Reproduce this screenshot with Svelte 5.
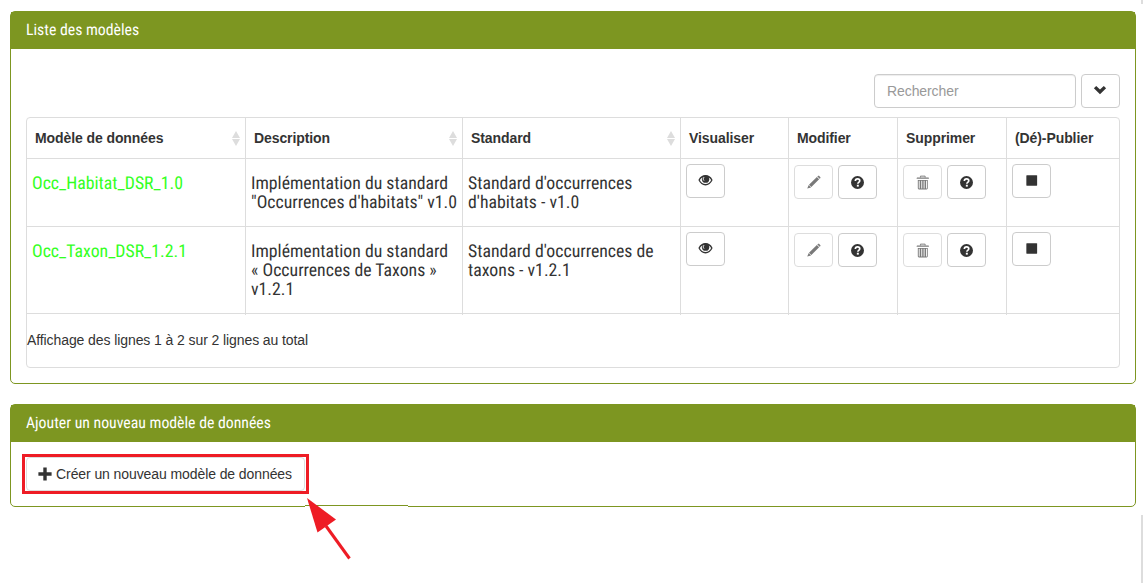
<script>
  const columns = [
    { label: 'Modèle de données', sort: true },
    { label: 'Description', sort: true },
    { label: 'Standard', sort: true },
    { label: 'Visualiser' },
    { label: 'Modifier' },
    { label: 'Supprimer' },
    { label: '(Dé)-Publier' }
  ];
  const rows = [
    {
      name: 'Occ_Habitat_DSR_1.0',
      description: ['Implémentation du standard', '"Occurrences d\'habitats" v1.0'],
      standard: ["Standard d'occurrences", "d'habitats - v1.0"]
    },
    {
      name: 'Occ_Taxon_DSR_1.2.1',
      description: ['Implémentation du standard', '« Occurrences de Taxons »', 'v1.2.1'],
      standard: ["Standard d'occurrences de", 'taxons - v1.2.1']
    }
  ];
</script>

{#snippet icon(name)}
  <svg class="icon" width="16" height="16" viewBox="0 0 16 16" fill="#333" aria-hidden="true">
    {#if name === 'eye'}
      <path d="M1.200 7.500C2.700 4.600 5.200 2.900 8 2.900s5.300 1.700 6.800 4.600C13.300 10.800 10.900 12.500 8 12.500S2.700 10.800 1.200 7.500Z" fill="none" stroke="#333" stroke-width="1.400" />
      <circle cx="8.100" cy="6.600" r="3.900" />
      <path d="M6.600 4.300c-1.300 1-1.300 2.800-.2 3.800" fill="none" stroke="#fff" stroke-width="1" />
    {:else if name === 'pencil'}
      <path d="m12.100 1.700.9-.9q.5-.3.900.1l1.400 1.400q.4.500.1.900l-.9.900ZM11.600 2.200 14 4.600l-8.300 8.200-2.500-2.500ZM2.900 10.700l2.500 2.500-4.100 1.300Z" />
    {:else if name === 'question'}
      <circle cx="8" cy="8" r="6.900" />
      <path d="M5.700 6.500C5.700 4.900 6.600 4.100 8.100 4.100s2.300.8 2.300 1.900c0 1.900-2 1.800-2 3.200" fill="none" stroke="#fff" stroke-width="1.800" />
      <path d="M7.300 10.400h2.100v2H7.300Z" fill="#fff" />
    {:else if name === 'trash'}
      <path d="M5.800 2.700V1.200h5v1.500" fill="none" stroke="#333" />
      <path d="M2.100 2.700h12.400l.5 1.300H1.600Z" />
      <path fill-rule="evenodd" d="M3 5.200h10.600v9q0 1.200-1.200 1.200H4.200Q3 15.400 3 14.200Zm1 1v8.100h1V6.200Zm2.700 0v8.100h1V6.200Zm2.500 0v8.100h1V6.200Zm2.500 0v8.100h1V6.200Z" />
    {:else if name === 'stop'}
      <rect x="2.500" y="2.500" width="11.500" height="11" rx=".5" />
    {:else if name === 'chevron'}
      <path d="m1.900 6.200 2.300-2.300L8 7.600l3.800-3.700 2.300 2.300L8 12.200Z" />
    {:else if name === 'plus'}
      <path d="M6.300 1.500h3.400v4.800h4.900v3.400H9.700v4.800H6.300V9.700H1.400V6.300h4.900Z" />
    {/if}
  </svg>
{/snippet}

{#snippet help()}
  <button class="btn square" aria-label="Aide">{@render icon('question')}</button>
{/snippet}

<main>
  <section class="panel list">
    <h2><span>Liste des modèles</span></h2>
    <div class="toolbar">
      <input type="text" placeholder="Rechercher" />
      <button class="btn toggle" aria-label="Options">{@render icon('chevron')}</button>
    </div>
    <div class="table">
      <div class="row head">
        {#each columns as column}
          <div class="cell">
            <b>{column.label}</b>
            {#if column.sort}
              <svg width="8" height="15" viewBox="0 0 8 15" fill="#ddd" aria-hidden="true">
                <path d="M4 0 8 7H0ZM0 8h8L4 15Z" />
              </svg>
            {/if}
          </div>
        {/each}
      </div>
      {#each rows as row}
        <div class="row body">
          <div class="cell text link"><span>{row.name}</span></div>
          <div class="cell text">{#each row.description as line}<span>{line}</span>{/each}</div>
          <div class="cell text">{#each row.standard as line}<span>{line}</span>{/each}</div>
          <div class="cell single"><button class="btn square" aria-label="Visualiser">{@render icon('eye')}</button></div>
          <div class="cell actions">
            <button class="btn square" disabled aria-label="Modifier">{@render icon('pencil')}</button>
            {@render help()}
          </div>
          <div class="cell actions">
            <button class="btn square" disabled aria-label="Supprimer">{@render icon('trash')}</button>
            {@render help()}
          </div>
          <div class="cell single"><button class="btn square" aria-label="Publier">{@render icon('stop')}</button></div>
        </div>
      {/each}
      <p>Affichage des lignes 1 à 2 sur 2 lignes au total</p>
    </div>
  </section>

  <section class="panel add">
    <h2><span>Ajouter un nouveau modèle de données</span></h2>
    <div class="content">
      <div class="highlight">
        <button class="btn create">{@render icon('plus')}<span>Créer un nouveau modèle de données</span></button>
      </div>
    </div>
  </section>

  <i class="edge top"></i>
  <i class="edge bottom"></i>
  <i class="seam"></i>
  <svg class="arrow" width="50" height="64" viewBox="0 0 50 64" aria-hidden="true">
    <path d="m19 28 23.500 32.500" stroke="#ee1c25" stroke-width="3" />
    <path d="M0 0 29 21.500 10.500 34.500Z" fill="#ee1c25" />
  </svg>
</main>

<style>
  :global(body) { margin: 0; background: #fff; }
  main {
    position: relative;
    box-sizing: border-box;
    width: 1143px;
    height: 583px;
    padding: 11px 7px 0 10px;
    overflow: hidden;
    font: 14px/20px "Liberation Sans", Arial, sans-serif;
    letter-spacing: -.09px;
    color: #333;
  }
  main *, main *::before { box-sizing: border-box; }
  .panel { border: 1px solid #7d9621; border-radius: 5px; background: #fff; }
  .list { height: 373px; }
  .add { height: 103px; margin-top: 20px; }
  h2 {
    height: 37px;
    margin: 0;
    padding: 0 15px;
    background: #7d9621;
    color: #fff;
    font: 400 15.780px/36px "Roboto Condensed", Roboto, sans-serif;
    font-stretch: 75%;
    letter-spacing: 0;
    text-rendering: geometricPrecision;
  }
  .toolbar { display: flex; justify-content: flex-end; gap: 5px; height: 68px; padding: 25px 15px 0; }
  input {
    width: 202px;
    height: 34px;
    padding: 0 12px;
    border: 1px solid #ccc;
    border-radius: 4px;
    box-shadow: inset 0 1px 1px rgba(0, 0, 0, .075);
    font: inherit;
    letter-spacing: inherit;
    background: #fff;
  }
  input::placeholder { color: #999; opacity: 1; }
  .btn {
    display: flex;
    align-items: center;
    justify-content: center;
    padding: 0;
    border: 1px solid #ccc;
    border-radius: 4px;
    background: #fff;
    color: #333;
    font: inherit;
    letter-spacing: inherit;
  }
  .btn:disabled { opacity: .65; }
  .icon { display: block; flex: none; }
  .toggle { width: 39px; height: 34px; }
  .toggle .icon { margin: -2px 0 0 -2px; }
  .table { height: 251px; margin: 0 15px; border: 1px solid #ddd; border-radius: 4px; }
  .row { display: grid; grid-template-columns: 219px 217px 218px 108px 109px 109px 1fr; border-bottom: 1px solid #ddd; }
  .head { height: 41px; }
  .body { height: 68px; }
  .body + .body { height: 87px; }
  .cell { min-width: 0; border-right: 1px solid #ddd; white-space: nowrap; }
  .cell:last-child { border-right: 0; }
  .head .cell { display: flex; align-items: center; justify-content: space-between; padding: 0 5px 0 8px; }
  .text {
    padding: 16px 5px;
    font: 400 17.750px/18.750px "Roboto Condensed", Roboto, sans-serif;
    font-stretch: 75%;
    letter-spacing: 0;
    text-rendering: geometricPrecision;
  }
  .text span { display: block; width: max-content; }
  .link { color: #3f2; }
  .single { padding: 5px; }
  .actions { display: flex; gap: 5px; padding: 6px 5px; }
  .square { width: 39px; height: 34px; }
  .square .icon { width: 15px; height: 15px; }
  .single .icon { margin-top: -1px; }
  p { margin: 0; padding-top: 16px; }
  .content { padding: 12px 11px; }
  .highlight { width: 287px; height: 40px; border: 3px solid #ee1c25; padding: 0 1px; }
  .create { width: 279px; height: 34px; gap: 3px; border-color: #ddd; }
  .create .icon { margin: -1px 0 0 -2px; }
  .edge { position: absolute; right: 0; width: 2px; background: #ddd; }
  .edge.top { top: 0; height: 4px; }
  .edge.bottom { top: 515px; bottom: 0; }
  .seam { position: absolute; left: 305px; top: 505px; width: 103px; height: 2px; border-top: 1px solid #7d9621; background: #fff; }
  .arrow { position: absolute; left: 307px; top: 498px; }
</style>
